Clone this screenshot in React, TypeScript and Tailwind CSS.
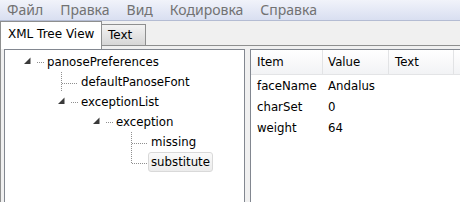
import React from 'react';

const menuItems = ['Файл', 'Правка', 'Вид', 'Кодировка', 'Справка'];

type TreeNode = {
  label: string;
  level: number;
  kind: 'open' | 'leaf' | 'leafLast';
  selected?: boolean;
};

const nodes: TreeNode[] = [
  { label: 'panosePreferences', level: 0, kind: 'open' },
  { label: 'defaultPanoseFont', level: 1, kind: 'leaf' },
  { label: 'exceptionList', level: 1, kind: 'open' },
  { label: 'exception', level: 2, kind: 'open' },
  { label: 'missing', level: 3, kind: 'leaf' },
  { label: 'substitute', level: 3, kind: 'leafLast', selected: true },
];

const indents = ['pl-[18px]', 'pl-[52px]', 'pl-[87px]', 'pl-[122px]'];

const rows = [
  ['faceName', 'Andalus'],
  ['charSet', '0'],
  ['weight', '64'],
];

const Connector: React.FC<{ kind: TreeNode['kind'] }> = ({ kind }) => (
  <svg width="21" height="20" viewBox="0 0 21 20" className="shrink-0">
    {kind === 'open' ? (
      <>
        <polygon points="7.5,5.5 7.5,12 1,12" fill="#3a3a3a" />
        <line x1="14" y1="10.5" x2="21" y2="10.5" stroke="#8f8f8f" strokeDasharray="1 1" />
      </>
    ) : (
      <>
        <line
          x1="4.5"
          y1="0"
          x2="4.5"
          y2={kind === 'leaf' ? 20 : 11}
          stroke="#8f8f8f"
          strokeDasharray="1 1"
        />
        <line x1="5" y1="11.5" x2="21" y2="11.5" stroke="#8f8f8f" strokeDasharray="1 1" />
      </>
    )}
  </svg>
);

export default function App() {
  return (
    <div className="w-[460px] h-[202px] overflow-hidden flex flex-col bg-[#f0f0f0] font-['DejaVu_Sans',sans-serif] text-[11.75px] text-black">
      {/* menu bar */}
      <div className="h-[21px] shrink-0 flex items-center pl-[7px] gap-[17px] bg-gradient-to-b from-[#f1f3fa] to-[#d9dff1] border-b border-[#b4bcd3] font-['Noto_Sans',sans-serif] text-[14px] text-[#727272]">
        {menuItems.map((m) => (
          <span key={m} className="leading-none">
            {m}
          </span>
        ))}
      </div>

      {/* tabs */}
      <div className="h-[28px] shrink-0 flex">
        <div className="w-[102px] h-[28px] bg-white border-l border-t border-r border-[#8e8f8f] pl-[7px] pt-[3px] leading-[18px] text-[12px]">
          XML Tree View
        </div>
        <div className="flex-1 flex flex-col">
          <div className="h-[25px] flex items-end border-b border-[#8e8f8f]">
            <div className="w-[45px] h-[21px] -ml-px border border-b-0 border-[#8e8f8f] bg-gradient-to-b from-[#f3f3f3] to-[#d6d6d6] pl-[6px] leading-[20px] text-[12px]">
              Text
            </div>
          </div>
        </div>
      </div>

      {/* panes */}
      <div className="flex-1 flex border-l border-[#8e8f8f] pl-[3px]">
        <div className="w-[241px] shrink-0 bg-white border border-b-0 border-[#828790] pt-[2px]">
          {nodes.map((n) => (
            <div key={n.label} className={`h-[20px] flex items-center ${indents[n.level]}`}>
              <Connector kind={n.kind} />
              <span
                className={`h-[20px] px-[2px] leading-[18px] border rounded-[3px] ${
                  n.selected
                    ? 'border-[#d9d9d9] bg-gradient-to-b from-[#fafafa] to-[#ececec]'
                    : 'border-transparent'
                }`}
              >
                {n.label}
              </span>
            </div>
          ))}
        </div>
        <div className="w-[5px] shrink-0" />
        <div className="flex-1 bg-white border border-r-0 border-b-0 border-[#828790]">
          <div className="h-[25px] grid grid-cols-[72px_66px_65px_1fr] bg-gradient-to-b from-white to-[#f2f3f5] border-b border-[#e3e4e6]">
            <div className="pl-[6px] leading-[24px] border-r border-[#e2e3e5]">Item</div>
            <div className="pl-[5px] leading-[24px] border-r border-[#e2e3e5]">Value</div>
            <div className="pl-[6px] leading-[24px] border-r border-[#e2e3e5]">Text</div>
            <div />
          </div>
          <div className="pt-[1px]">
            {rows.map(([a, b]) => (
              <div key={a} className="h-[21px] grid grid-cols-[72px_66px_65px_1fr] leading-[21px]">
                <div className="pl-[6px]">{a}</div>
                <div className="pl-[5px]">{b}</div>
                <div />
                <div />
              </div>
            ))}
          </div>
        </div>
      </div>
    </div>
  );
}
